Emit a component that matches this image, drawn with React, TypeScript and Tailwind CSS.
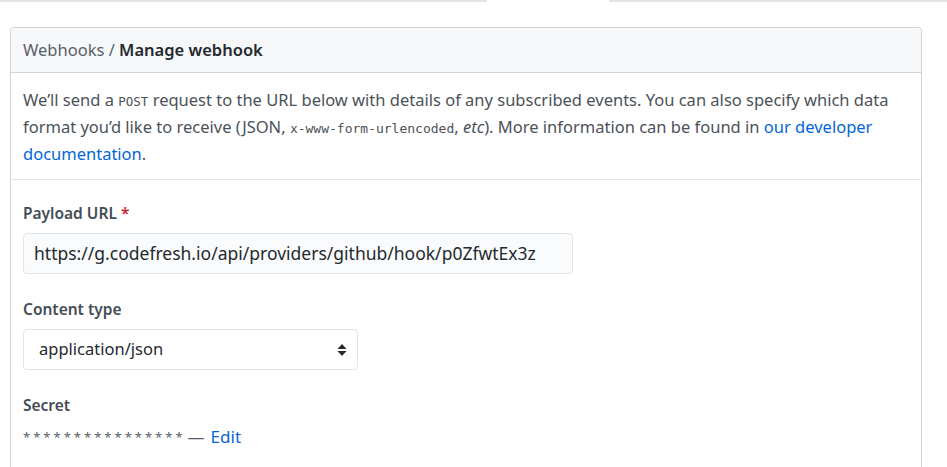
const mono = "font-['DejaVu_Sans_Mono',monospace] leading-none";

function Field({ label, required, children }: { label: string; required?: boolean; children: React.ReactNode }) {
  return (
    <div className="flex flex-col">
      <div className="h-6 text-[15.5px] font-semibold leading-6 text-[#444d56]">
        {label}
        {required ? <span className="text-[#cb2431]"> *</span> : null}
      </div>
      <div className="mt-2">{children}</div>
    </div>
  );
}

export default function App() {
  return (
    <div className="h-[467px] w-[947px] overflow-hidden bg-white font-['Noto_Sans',sans-serif]">
      <div className="flex h-[2px]">
        <div className="w-[487px] bg-[#e1e4e8]" />
        <div className="w-[122px]" />
        <div className="flex-1 bg-[#e1e4e8]" />
      </div>

      <div className="ml-[10px] mt-[25px] w-[912px] rounded-t-[4px] border border-b-0 border-[#d1d5da]">
        <div className="flex h-[45px] items-center rounded-t-[4px] border-b border-[#d1d5da] bg-[#f6f8fa] px-[12px] text-[16.5px] text-[#586069]">
          Webhooks /&nbsp;<span className="font-semibold text-[#24292e]">Manage webhook</span>
        </div>

        <p className="border-b border-[#e1e4e8] px-[12px] pb-[12px] pt-[13px] text-[16.5px] leading-[27px] text-[#4b5259]">
          We’ll send a <code className={`${mono} text-[12.5px]`}>POST</code> request to the URL below with details of any subscribed events. You can also specify which data format you’d like to receive (JSON, <code className={`${mono} text-[13px]`}>x-www-form-urlencoded</code>, <em>etc</em>). More information can be found in <span className="text-[#0366d6]">our developer documentation</span>.
        </p>

        <div className="flex flex-col gap-[23px] px-[12px] pb-10 pt-[21px]">
          <Field label="Payload URL" required>
            <div className="flex h-[41px] w-[550px] items-center rounded-[4px] border border-[#e1e4e8] bg-[#fafbfc] px-[10px] text-[17.5px] text-[#24292e]">
              https://g.codefresh.io/api/providers/github/hook/p0ZfwtEx3z
            </div>
          </Field>
          <Field label="Content type">
            <div className="flex h-[41px] w-[335px] items-center justify-between rounded-[4px] border border-[#e1e4e8] bg-white pl-[15px] pr-[10px] text-[16.5px] text-[#24292e]">
              <span>application/json</span>
              <svg width="10" height="14" viewBox="0 0 10 14" className="text-[#24292e]">
                <path d="M5 1 L9.5 6 H0.5 Z M5 13 L9.5 8 H0.5 Z" fill="currentColor" />
              </svg>
            </div>
          </Field>
          <Field label="Secret">
            <div className="flex items-center text-[17px] leading-6 text-[#586069]">
              <span className="text-[13px] tracking-[3px]">****************</span>
              <span className="ml-[2px]">—</span>
              <span className="ml-[6px] text-[#0366d6]">Edit</span>
            </div>
          </Field>
        </div>
      </div>
    </div>
  );
}
